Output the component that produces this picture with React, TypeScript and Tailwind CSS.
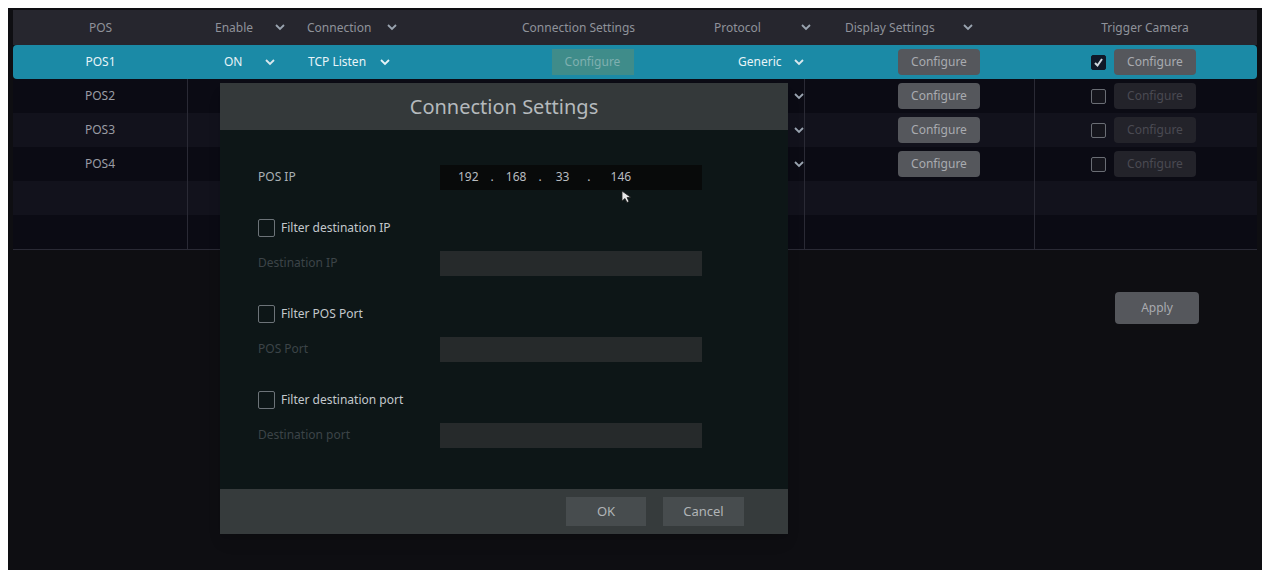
import React from "react";

const Chev = ({ c = "#9aa4b0" }: { c?: string }) => (
  <svg width="10" height="7" viewBox="0 0 10 7"><path d="M1 1l4 4 4-4" stroke={c} strokeWidth="1.8" fill="none" /></svg>
);

const Btn = ({ dim }: { dim?: boolean }) => (
  <div className={`w-[82px] h-[26px] flex items-center justify-center text-[12px] rounded-sm ${dim ? "bg-[#23232a] text-[#4a4a52]" : "bg-[#55575c] text-[#a9abb0]"}`}>Configure</div>
);

const Box = ({ checked }: { checked?: boolean }) => (
  <div className={`w-[15px] h-[15px] rounded-[2px] border flex items-center justify-center ${checked ? "bg-[#101828] border-[#101828]" : "border-[#6a6d74] bg-[#15151c]"}`}>
    {checked && <svg width="11" height="11" viewBox="0 0 11 11"><path d="M2 6l2.5 2.5L9 2" stroke="#cfd6de" strokeWidth="2" fill="none" /></svg>}
  </div>
);

function Row({ i }: { i: number }) {
  const sel = i === 0;
  const has = i < 4;
  const bg = sel ? "bg-[#1b8aa6]" : i % 2 ? "bg-[#0b0b14]" : "bg-[#12121c]";
  const div = sel ? "" : "border-r border-[#2a2a35]";
  return (
    <div className={`flex h-[34px] items-center text-[12px] ${bg} ${sel ? "rounded-sm text-[#e8f4f8]" : "text-[#9a9ca4]"}`}>
      <div className={`w-[175px] h-full flex items-center justify-center ${div}`}>{has ? `POS${i + 1}` : ""}</div>
      <div className="w-[102px] h-full flex items-center">
        {sel && <><span className="ml-[36px]">ON</span><span className="ml-[22px]"><Chev c="#dbe8ee" /></span></>}
      </div>
      <div className="w-[215px] h-full flex items-center">
        {sel && <><span className="ml-[18px]">TCP Listen</span><span className="ml-[14px]"><Chev c="#e8f4f8" /></span></>}
      </div>
      <div className="w-[175px] h-full flex items-center justify-center">{sel && <div className="w-[82px] h-[26px] flex items-center justify-center bg-[#3f8c8a] text-[#7fb0b0] text-[12px]">Configure</div>}</div>
      <div className={`w-[125px] h-full flex items-center ${div}`}>
        {has && <><span className="ml-[58px] w-[56px]">{sel ? "Generic" : ""}</span><Chev c={sel ? "#dbe8ee" : "#9aa4b0"} /></>}
      </div>
      <div className={`w-[230px] h-full flex items-center ${div}`}>
        {has && <div className="ml-[93px]"><Btn /></div>}
      </div>
      <div className="w-[220px] h-full flex items-center">
        {has && <><div className="ml-[56px]"><Box checked={sel} /></div><div className="ml-[8px]">{sel ? <Btn /> : <Btn dim />}</div></>}
      </div>
    </div>
  );
}

const Field = ({ label, dim }: { label: string; dim?: boolean }) => (
  <div className="flex items-center h-[26px]">
    <span className={`w-[182px] text-[12px] ${dim ? "text-[#3c4448]" : "text-[#a9b0b4]"}`}>{label}</span>
    <div className={`w-[262px] h-[25px] ${dim ? "bg-[#262a2b]" : "bg-[#080a0a] flex items-center text-[12px] text-[#b8bcc0]"}`}>
      {!dim && <><span className="ml-[18px]">192</span><span className="ml-[12px]">.</span><span className="ml-[12px]">168</span><span className="ml-[12px]">.</span><span className="ml-[14px]">33</span><span className="ml-[18px]">.</span><span className="ml-[20px]">146</span></>}
    </div>
  </div>
);

const Check = ({ label }: { label: string }) => (
  <div className="flex items-center gap-[6px] h-[24px] text-[12px] text-[#c3c8cc]">
    <div className="w-[17px] h-[18px] border border-[#6c7378] rounded-[2px]" />{label}
  </div>
);

export default function App() {
  return (
    <div className="w-[1271px] h-[579px] bg-white p-[8px] font-['Liberation_Sans'] relative overflow-hidden">
      <div className="w-[1254px] h-[562px] bg-[#0e0e12] px-[5px] pt-[2px]">
        <div className="flex h-[35px] items-center text-[12px] text-[#8f929a] bg-[#26262e]">
          <div className="w-[175px] text-center">POS</div>
          <div className="w-[102px] flex items-center"><span className="ml-[27px]">Enable</span><span className="ml-[22px]"><Chev /></span></div>
          <div className="w-[215px] flex items-center"><span className="ml-[17px]">Connection</span><span className="ml-[16px]"><Chev /></span></div>
          <div className="w-[175px] flex items-center"><span className="ml-[17px]">Connection Settings</span></div>
          <div className="w-[125px] flex items-center"><span className="ml-[34px]">Protocol</span><span className="ml-[40px]"><Chev /></span></div>
          <div className="w-[230px] flex items-center"><span className="ml-[40px]">Display Settings</span><span className="ml-[28px]"><Chev /></span></div>
          <div className="w-[220px] text-center">Trigger Camera</div>
        </div>
        <div className="flex flex-col border-b border-[#2a2a35]">
          {[0, 1, 2, 3, 4, 5].map((i) => <Row key={i} i={i} />)}
        </div>
        <div className="flex justify-end pr-[58px] mt-[42px]">
          <div className="w-[84px] h-[32px] bg-[#55575c] text-[#a9abb0] text-[12px] flex items-center justify-center rounded-sm">Apply</div>
        </div>
      </div>
      <div className="absolute left-[220px] top-[83px] w-[568px] h-[451px] flex flex-col shadow-lg">
        <div className="h-[47px] bg-[#34393a] flex items-center justify-center text-[20px] text-[#b5babd]">Connection Settings</div>
        <div className="flex-1 bg-[#0d1617] pl-[38px] pt-[34px] flex flex-col">
          <Field label="POS IP" />
          <div className="mt-[26px]"><Check label="Filter destination IP" /></div>
          <div className="mt-[10px]"><Field label="Destination IP" dim /></div>
          <div className="mt-[26px]"><Check label="Filter POS Port" /></div>
          <div className="mt-[10px]"><Field label="POS Port" dim /></div>
          <div className="mt-[26px]"><Check label="Filter destination port" /></div>
          <div className="mt-[10px]"><Field label="Destination port" dim /></div>
        </div>
        <div className="h-[45px] bg-[#363b3c] flex items-center justify-end gap-[17px] pr-[44px]">
          <div className="w-[80px] h-[29px] bg-[#474c4e] text-[#b0b4b6] text-[13px] flex items-center justify-center">OK</div>
          <div className="w-[81px] h-[29px] bg-[#474c4e] text-[#b0b4b6] text-[13px] flex items-center justify-center">Cancel</div>
        </div>
      </div>
      <svg className="absolute left-[621px] top-[190px]" width="12" height="14" viewBox="0 0 12 14"><path d="M1 1v10l3-2.5 2 4 2-1-2-4h4z" fill="#e8e8e8" stroke="#222" strokeWidth="0.8" /></svg>
    </div>
  );
}
